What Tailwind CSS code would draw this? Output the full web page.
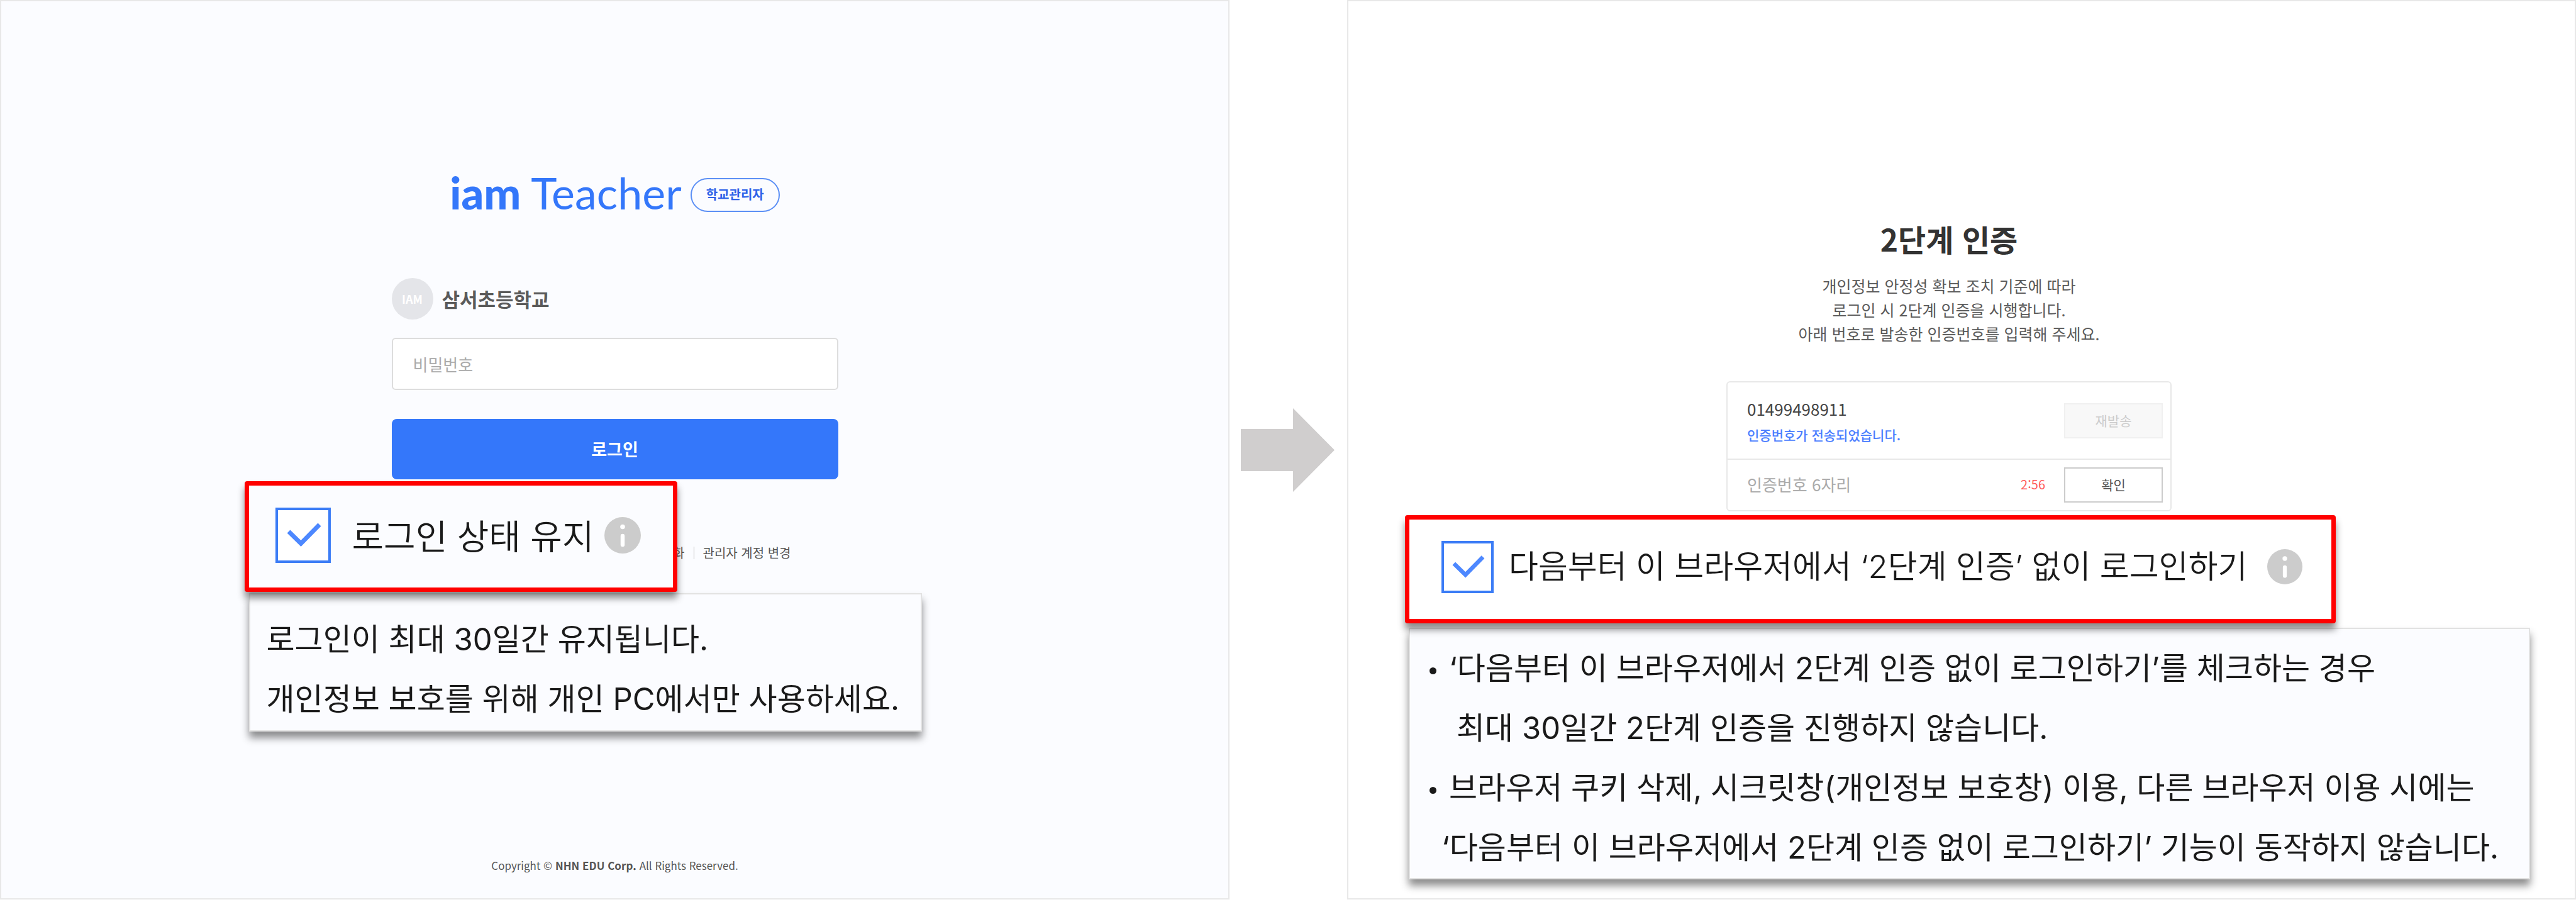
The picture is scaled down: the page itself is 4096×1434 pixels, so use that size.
<!DOCTYPE html>
<html lang="ko">
<head>
  <meta charset="UTF-8">
  <meta name="viewport" content="width=device-width, initial-scale=1.0">
  <title>iam Teacher 로그인 안내</title>
  <script src="https://cdn.jsdelivr.net/npm/@tailwindcss/browser@4"></script>
</head>
<body class="min-h-screen bg-white font-['Noto_Sans_CJK_KR',sans-serif]">
  <main class="grid min-h-screen w-full grid-cols-[1955fr_187fr_1954fr] pb-1">

    <!-- Login -->
    <section class="flex flex-col items-center border-2 border-[#e8e8e8] bg-[#fbfcff]">
      <header class="mt-[281px] flex h-[54px] items-center gap-[14px] text-[#3477fa]">
        <h1 class="pb-2 font-[Lato] text-[70px] leading-[54px] whitespace-nowrap"><span class="font-black">iam</span> Teacher</h1>
        <span class="flex h-[54px] w-[142px] items-center justify-center rounded-full border-2 border-[#5b8ff5] pb-[2px] text-[20px] font-bold text-[#2e62e8]">학교관리자</span>
      </header>

      <form class="mt-[105px] w-[710px]" onsubmit="return false">
        <div class="flex items-center gap-[14px]">
          <span class="flex size-[66px] items-center justify-center rounded-full bg-[#e4e5e9] text-[18px] font-bold text-white">IAM</span>
          <p class="text-[31px] leading-[44px] font-bold text-[#5a5a5a]">삼서초등학교</p>
        </div>
        <input type="password" aria-label="비밀번호" placeholder="비밀번호" class="mt-[29px] block h-[83px] w-full rounded-md border-2 border-[#dddddd] bg-white px-8 text-[26px] placeholder:text-[#aaaaaa]">
        <button class="mt-[46px] block h-24 w-full rounded-lg bg-[#3477fa] text-[27px] font-bold text-white">로그인</button>

        <div class="relative mt-[102px]">
          <nav class="flex items-center justify-end gap-[14px] pr-[75px] text-[20px] leading-[30px] text-[#555555]">
            <a href="#">비밀번호 초기화</a>
            <span class="h-5 w-px bg-[#bbbbbb]"></span>
            <a href="#">관리자 계정 변경</a>
          </nav>

          <!-- Callout -->
          <div class="absolute -top-[99px] -left-[234px] w-max">
            <div class="relative z-10 flex h-44 w-[688px] items-center rounded border-[7px] border-[#ff0000] bg-[#fbfcff] pb-1 pl-[42px] shadow-[0_10px_12px_rgba(0,0,0,0.45)]">
              <span class="relative size-[88px]">
                <input id="keep" type="checkbox" checked class="block size-full appearance-none border-4 border-[#3b7cf6] bg-white">
                <svg class="pointer-events-none absolute inset-0 size-full" viewBox="0 0 88 88" fill="none" stroke="#4d88ff" stroke-width="7"><path d="M21 38 40.500 57 70 27"/></svg>
              </span>
              <label for="keep" class="ml-[34px] pb-1 text-[55px] leading-[80px] font-[350] whitespace-nowrap text-[#1a1a1a]">로그인 상태 유지</label>
              <svg class="ml-4 size-[58px]" viewBox="0 0 58 58"><circle cx="29" cy="29" r="29" fill="#cccccc"/><circle cx="29" cy="15.500" r="3.800" fill="#fff"/><path d="M29 30V44" stroke="#fff" stroke-width="6.500" stroke-linecap="round"/></svg>
            </div>
            <div class="mt-[2px] ml-[7px] w-[1070px] border-2 border-[#e2e2e2] bg-[#fbfcff] pt-6 pb-[2px] pl-[26px] font-[Inter,'Noto_Sans_CJK_KR',sans-serif] text-[49px] leading-[95px] whitespace-nowrap text-[#1a1a1a] shadow-[0_10px_12px_rgba(0,0,0,0.45)]">
              <p>로그인이 최대 30일간 유지됩니다.</p>
              <p>개인정보 보호를 위해 개인 PC에서만 사용하세요.</p>
            </div>
          </div>
        </div>
      </form>

      <footer class="mt-auto mb-[38px] text-[17px] leading-7 text-[#555555]">Copyright © <b>NHN EDU Corp.</b> All Rights Reserved.</footer>
    </section>

    <!-- Arrow -->
    <div class="flex items-center justify-center pr-[2px]">
      <svg class="h-[133px] w-[149px]" viewBox="0 0 149 133" fill="#d0cece"><path d="M0 33H83V0L149 66.500 83 133V100H0z"/></svg>
    </div>

    <!-- Two-step verification -->
    <section class="flex flex-col items-center border-2 border-[#e8e8e8] bg-white pr-10">
      <h2 class="mt-[341px] text-[48px] leading-[72px] font-bold text-[#333333]">2단계 인증</h2>
      <p class="mt-5 text-center text-[25px] leading-[38px] text-[#5a5a5a]">개인정보 안정성 확보 조치 기준에 따라<br>로그인 시 2단계 인증을 시행합니다.<br>아래 번호로 발송한 인증번호를 입력해 주세요.</p>

      <form class="relative mt-[57px] w-[708px]" onsubmit="return false">
        <div class="rounded-md border-2 border-[#e8e8e8]">
          <div class="flex h-[123px] items-center justify-between border-b-2 border-[#e8e8e8] pr-3 pl-[31px]">
            <div class="pt-[2px]">
              <p class="text-[26px] leading-[42px] text-[#444444]">01499498911</p>
              <p class="text-[21px] leading-10 font-medium text-[#4a7dff]">인증번호가 전송되었습니다.</p>
            </div>
            <button disabled class="h-14 w-[157px] border-2 border-[#f0f0f0] bg-[#f8f8f8] text-[21px] text-[#cccccc]">재발송</button>
          </div>
          <div class="flex h-20 items-center pr-3 pl-[31px]">
            <input type="text" aria-label="인증번호" placeholder="인증번호 6자리" class="min-w-0 flex-1 pb-1 text-[26px] placeholder:text-[#aaaaaa]">
            <span class="pb-[2px] text-[20px] text-[#ff5a5a]">2:56</span>
            <button class="ml-[30px] h-14 w-[157px] border-2 border-[#cccccc] bg-white text-[21px] text-[#555555]">확인</button>
          </div>
        </div>

        <!-- Callout -->
        <div class="absolute top-[213px] -left-[511px] w-max">
          <div class="relative z-10 flex h-[172px] w-[1480px] items-center rounded border-[7px] border-[#ff0000] bg-white pb-2 pl-[51px] shadow-[0_10px_12px_rgba(0,0,0,0.45)]">
            <span class="relative size-[83px]">
              <input id="skip" type="checkbox" checked class="block size-full appearance-none border-4 border-[#3b7cf6] bg-white">
              <svg class="pointer-events-none absolute inset-0 size-full" viewBox="0 0 88 88" fill="none" stroke="#4d88ff" stroke-width="7"><path d="M21 38 40.500 57 70 27"/></svg>
            </span>
            <label for="skip" class="ml-6 font-[Inter,'Noto_Sans_CJK_KR',sans-serif] text-[51px] leading-[80px] font-[350] whitespace-nowrap text-[#1a1a1a]">다음부터 이 브라우저에서 ‘2단계 인증’ 없이 로그인하기</label>
            <svg class="ml-8 size-14" viewBox="0 0 58 58"><circle cx="29" cy="29" r="29" fill="#cccccc"/><circle cx="29" cy="15.500" r="3.800" fill="#fff"/><path d="M29 30V44" stroke="#fff" stroke-width="6.500" stroke-linecap="round"/></svg>
          </div>
          <ul class="mt-[7px] ml-[6px] w-[1783px] border-2 border-[#e2e2e2] bg-[#fbfcff] pt-[15px] pb-[1px] pl-[31px] font-[Inter,'Noto_Sans_CJK_KR',sans-serif] text-[49px] leading-[95px] whitespace-nowrap text-[#1a1a1a] shadow-[0_10px_12px_rgba(0,0,0,0.45)]">
            <li class="flex gap-5">
              <span class="mt-[46px] size-[11px] shrink-0 rounded-full bg-[#1a1a1a]"></span>
              <p>‘다음부터 이 브라우저에서 2단계 인증 없이 로그인하기’를 체크하는 경우<br><span class="pl-3">최대 30일간 2단계 인증을 진행하지 않습니다.</span></p>
            </li>
            <li class="flex gap-5">
              <span class="mt-[46px] size-[11px] shrink-0 rounded-full bg-[#1a1a1a]"></span>
              <p>브라우저 쿠키 삭제, 시크릿창(개인정보 보호창) 이용, 다른 브라우저 이용 시에는<br><span class="-ml-3">‘다음부터 이 브라우저에서 2단계 인증 없이 로그인하기’ 기능이 동작하지 않습니다.</span></p>
            </li>
          </ul>
        </div>
      </form>
    </section>
  </main>
</body>
</html>
